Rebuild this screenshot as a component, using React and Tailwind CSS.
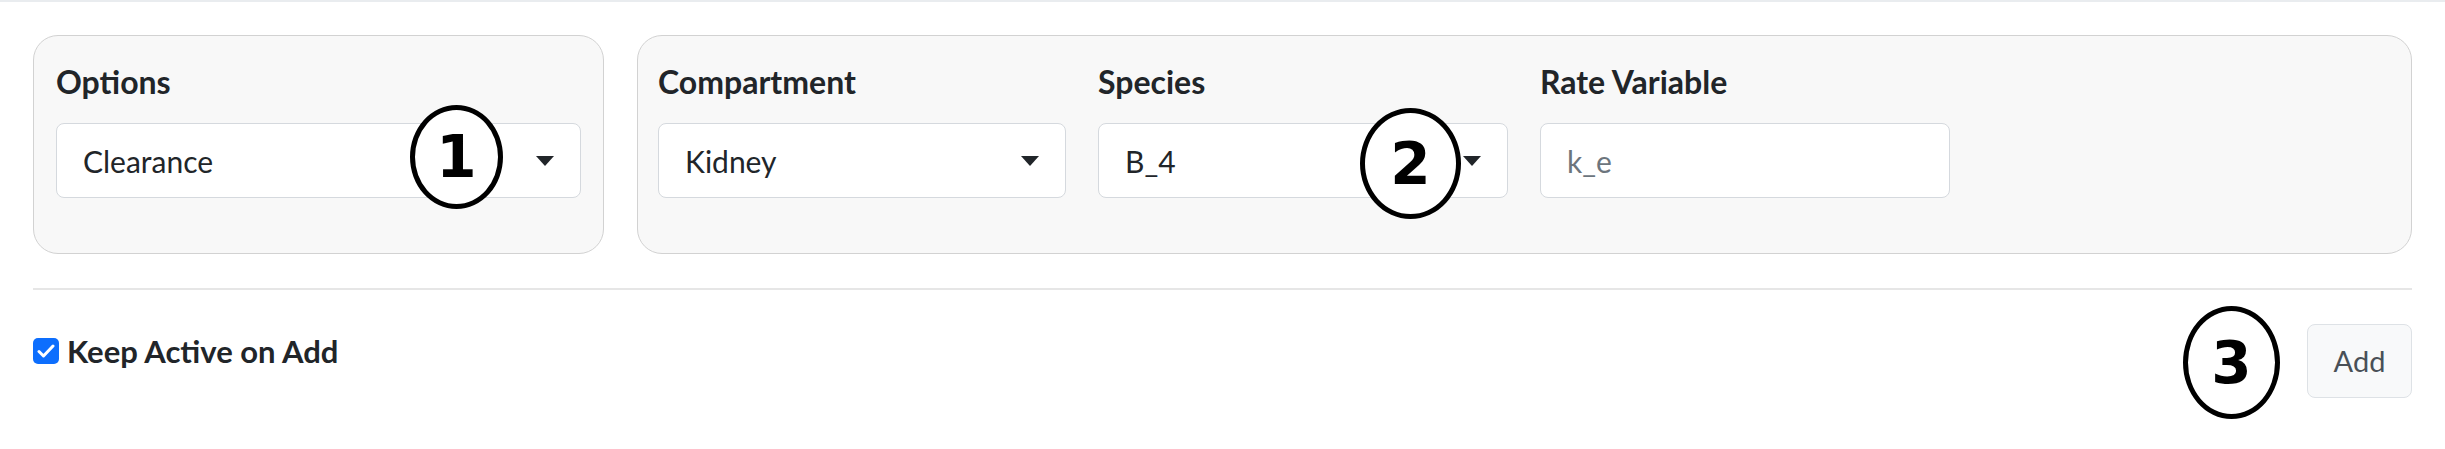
import React from 'react';

const FONT = { fontFamily: 'Lato, "Open Sans", sans-serif' };

function Caret() {
  return (
    <svg width="20" height="10" viewBox="0 0 20 10" className="absolute right-[25px] top-[32px]">
      <path d="M1 0 L19 0 L10 10 Z" fill="#212529" />
    </svg>
  );
}

function SelectBox({ value }) {
  return (
    <div className="relative h-[75px] w-full rounded-[8px] border border-[#d5d9de] bg-white pl-[26px] flex items-center text-[30px] leading-[36px] text-[#212529]">
      {value}
      <Caret />
    </div>
  );
}

function Field({ label, children }) {
  return (
    <div className="flex flex-col">
      <div className="h-[36px] text-[32px] leading-[36px] font-bold text-[#212529] mb-[23px]">{label}</div>
      {children}
    </div>
  );
}

function Marker({ n, className }) {
  return (
    <div
      className={`absolute flex items-center justify-center rounded-[50%] border-[5px] border-black bg-white text-[58px] font-bold leading-none text-black ${className}`}
      style={{ fontFamily: '"DejaVu Sans", sans-serif' }}
    >
      {n}
    </div>
  );
}

export default function App() {
  return (
    <div className="relative w-[2445px] h-[449px] bg-white border-t-2 border-[#e9ecef] px-[33px] pt-[33px]" style={FONT}>
      {/* top panels */}
      <div className="flex gap-[33px]">
        <div className="w-[571px] h-[219px] rounded-[25px] border border-[#d2d2d2] bg-[#f8f8f8] px-[22px] pt-[28px]">
          <Field label="Options">
            <SelectBox value="Clearance" />
          </Field>
        </div>
        <div className="flex-1 h-[219px] rounded-[25px] border border-[#d2d2d2] bg-[#f8f8f8] pl-[20px] pt-[28px]">
          <div className="grid grid-cols-[408px_410px_410px] gap-x-[32px]">
            <Field label="Compartment">
              <SelectBox value="Kidney" />
            </Field>
            <Field label="Species">
              <SelectBox value="B_4" />
            </Field>
            <Field label="Rate Variable">
              <div className="h-[75px] w-full rounded-[8px] border border-[#d5d9de] bg-white pl-[26px] flex items-center text-[30px] leading-[36px] text-[#6c757d]">
                k_e
              </div>
            </Field>
          </div>
        </div>
      </div>

      {/* divider */}
      <div className="mt-[34px] h-[2px] bg-[#e6e6e6]" />

      {/* footer row */}
      <div className="flex items-start justify-between">
        <label className="mt-[46px] flex items-center gap-[8px]">
          <span className="flex h-[26px] w-[26px] items-center justify-center rounded-[5px] bg-[#0d6efd]">
            <svg width="18" height="14" viewBox="0 0 18 14">
              <path d="M2 7.5 L6.5 12 L16 2" fill="none" stroke="white" strokeWidth="3" strokeLinecap="round" strokeLinejoin="round" />
            </svg>
          </span>
          <span className="text-[31px] leading-[30px] font-bold text-[#212529]">Keep Active on Add</span>
        </label>
        <button className="mt-[34px] h-[74px] w-[105px] rounded-[8px] border border-[#dee2e6] bg-[#f8f9fa] text-[29px] text-[#495057]">
          Add
        </button>
      </div>

      <Marker n="1" className="left-[410px] top-[103px] w-[93px] h-[104px]" />
      <Marker n="2" className="left-[1360px] top-[106px] w-[101px] h-[111px]" />
      <Marker n="3" className="left-[2183px] top-[304px] w-[97px] h-[113px]" />
    </div>
  );
}
